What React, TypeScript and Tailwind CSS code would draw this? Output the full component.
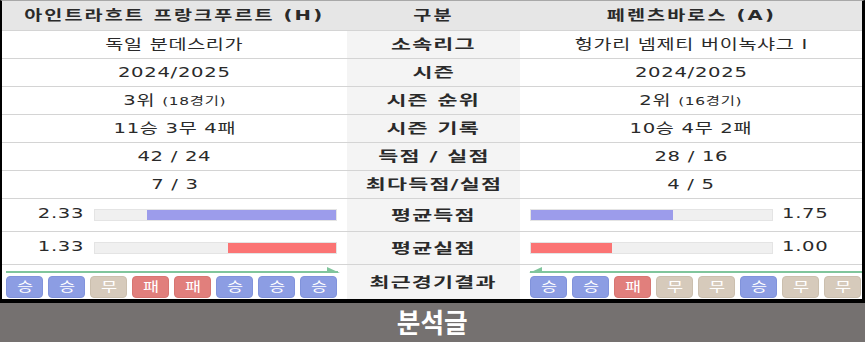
import React from "react";

type R = "승" | "무" | "패";

const rows: [React.ReactNode, string, React.ReactNode][] = [
  ["독일 분데스리가", "소속리그", "헝가리 넴제티 버이녹샤그 I"],
  ["2024/2025", "시즌", "2024/2025"],
  [
    <>3위 <span className="text-[11px]">(18경기)</span></>,
    "시즌 순위",
    <>2위 <span className="text-[11px]">(16경기)</span></>,
  ],
  ["11승 3무 4패", "시즌 기록", "10승 4무 2패"],
  ["42 / 24", "득점 / 실점", "28 / 16"],
  ["7 / 3", "최다득점/실점", "4 / 5"],
];

const badgeCls: Record<R, string> = {
  승: "bg-[#8c9de3] border-[#8193db]",
  무: "bg-[#d6cabb] border-[#cbbfae]",
  패: "bg-[#e17f7c] border-[#d77571]",
};

const T = ({ children, origin = "origin-center" }: { children: React.ReactNode; origin?: string }) => (
  <span className={`inline-block scale-x-[1.4] tracking-[0.5px] whitespace-nowrap ${origin}`}>{children}</span>
);

const H = ({ children }: { children: React.ReactNode }) => (
  <span className="inline-block scale-x-[1.4] tracking-[1.5px] whitespace-nowrap">{children}</span>
);

const M = ({ children }: { children: React.ReactNode }) => (
  <span className="inline-block scale-x-[1.55] tracking-[0.8px] whitespace-nowrap">{children}</span>
);

const Badges = ({ list }: { list: R[] }) => (
  <div className="flex gap-[5px]">
    {list.map((r, i) => (
      <div
        key={i}
        className={`w-[37px] h-[22px] rounded-[4px] border flex items-center justify-center text-white text-[13px] ${badgeCls[r]}`}
      >
        <span className="inline-block scale-x-[1.35]">{r}</span>
      </div>
    ))}
  </div>
);

const Bar = ({ value, color, align }: { value: number; color: string; align: "left" | "right" }) => {
  const w = 243;
  return (
    <div className={`w-[243px] h-[12px] bg-[#f0f0f0] border border-[#e4e4e4] flex ${align === "right" ? "justify-end" : "justify-start"}`}>
      <div className={`h-full ${color}`} style={{ width: Math.round((value / 3) * w) }} />
    </div>
  );
};

export default function App() {
  const cols = "grid grid-cols-[345px_173px_342px]";
  return (
    <div className="w-[865px] h-[342px] bg-[#757170] font-['DejaVu_Sans','Noto_Sans_CJK_KR',sans-serif] text-[14px] text-[#2a2a2a]">
      <div className="bg-white border-t border-t-[#a8a8a8] border-l-2 border-l-black border-r-[3px] border-r-black border-b-4 border-b-black">
        {/* header */}
        <div className={`${cols} h-[30px] bg-[#e6e6e6] border-b border-[#d4d4d4] font-bold`}>
          <div className="flex items-center justify-center"><H>아인트라흐트 프랑크푸르트 (H)</H></div>
          <div className="flex items-center justify-center"><H>구분</H></div>
          <div className="flex items-center justify-center"><H>페렌츠바로스 (A)</H></div>
        </div>
        {rows.map((r, i) => (
          <div key={i} className={`${cols} h-[28px] border-b border-[#d4d4d4]`}>
            <div className="flex items-center justify-center"><T>{r[0]}</T></div>
            <div className="flex items-center justify-center bg-[#f4f4f4] font-bold"><M>{r[1]}</M></div>
            <div className="flex items-center justify-center"><T>{r[2]}</T></div>
          </div>
        ))}
        {/* avg scored */}
        <div className={`${cols} h-[33px] border-b border-[#d4d4d4]`}>
          <div className="flex items-center">
            <div className="w-[82px] text-right pb-[3px]"><T origin="origin-right">2.33</T></div>
            <div className="ml-[10px]"><Bar value={2.33} color="bg-[#9c9ceb]" align="right" /></div>
          </div>
          <div className="flex items-center justify-center bg-[#f4f4f4] font-bold"><M>평균득점</M></div>
          <div className="flex items-center pl-[10px]">
            <Bar value={1.75} color="bg-[#9c9ceb]" align="left" />
            <div className="ml-[9px] pb-[3px]"><T origin="origin-left">1.75</T></div>
          </div>
        </div>
        {/* avg conceded */}
        <div className={`${cols} h-[33px] border-b border-[#d4d4d4]`}>
          <div className="flex items-center">
            <div className="w-[82px] text-right pb-[3px]"><T origin="origin-right">1.33</T></div>
            <div className="ml-[10px]"><Bar value={1.33} color="bg-[#fb7474]" align="right" /></div>
          </div>
          <div className="flex items-center justify-center bg-[#f4f4f4] font-bold"><M>평균실점</M></div>
          <div className="flex items-center pl-[10px]">
            <Bar value={1.0} color="bg-[#fb7474]" align="left" />
            <div className="ml-[9px] pb-[3px]"><T origin="origin-left">1.00</T></div>
          </div>
        </div>
        {/* recent */}
        <div className={`${cols} h-[34px]`}>
          <div className="flex flex-col pl-[4px]">
            <svg width="334" height="10" className="block">
              <line x1="0" y1="7" x2="332" y2="7" stroke="#80c59c" strokeWidth="2" />
              <polygon points="321,2 334,8 321,8" fill="#80c59c" />
            </svg>
            <div className="mt-[1px]">
              <Badges list={["승", "승", "무", "패", "패", "승", "승", "승"]} />
            </div>
          </div>
          <div className="flex items-center justify-center bg-[#f4f4f4] font-bold"><M>최근경기결과</M></div>
          <div className="flex flex-col pl-[8px]">
            <svg width="334" height="10" className="block">
              <line x1="2" y1="7" x2="334" y2="7" stroke="#80c59c" strokeWidth="2" />
              <polygon points="14,2 1,8 14,8" fill="#80c59c" />
            </svg>
            <div className="mt-[1px] pl-[2px]">
              <Badges list={["승", "승", "패", "무", "무", "승", "무", "무"]} />
            </div>
          </div>
        </div>
      </div>
      <div className="h-[39px] flex items-center justify-center text-white font-bold text-[27px]">
        <span className="inline-block scale-x-[0.95] font-['Noto_Sans_CJK_KR',sans-serif]">분석글</span>
      </div>
    </div>
  );
}
